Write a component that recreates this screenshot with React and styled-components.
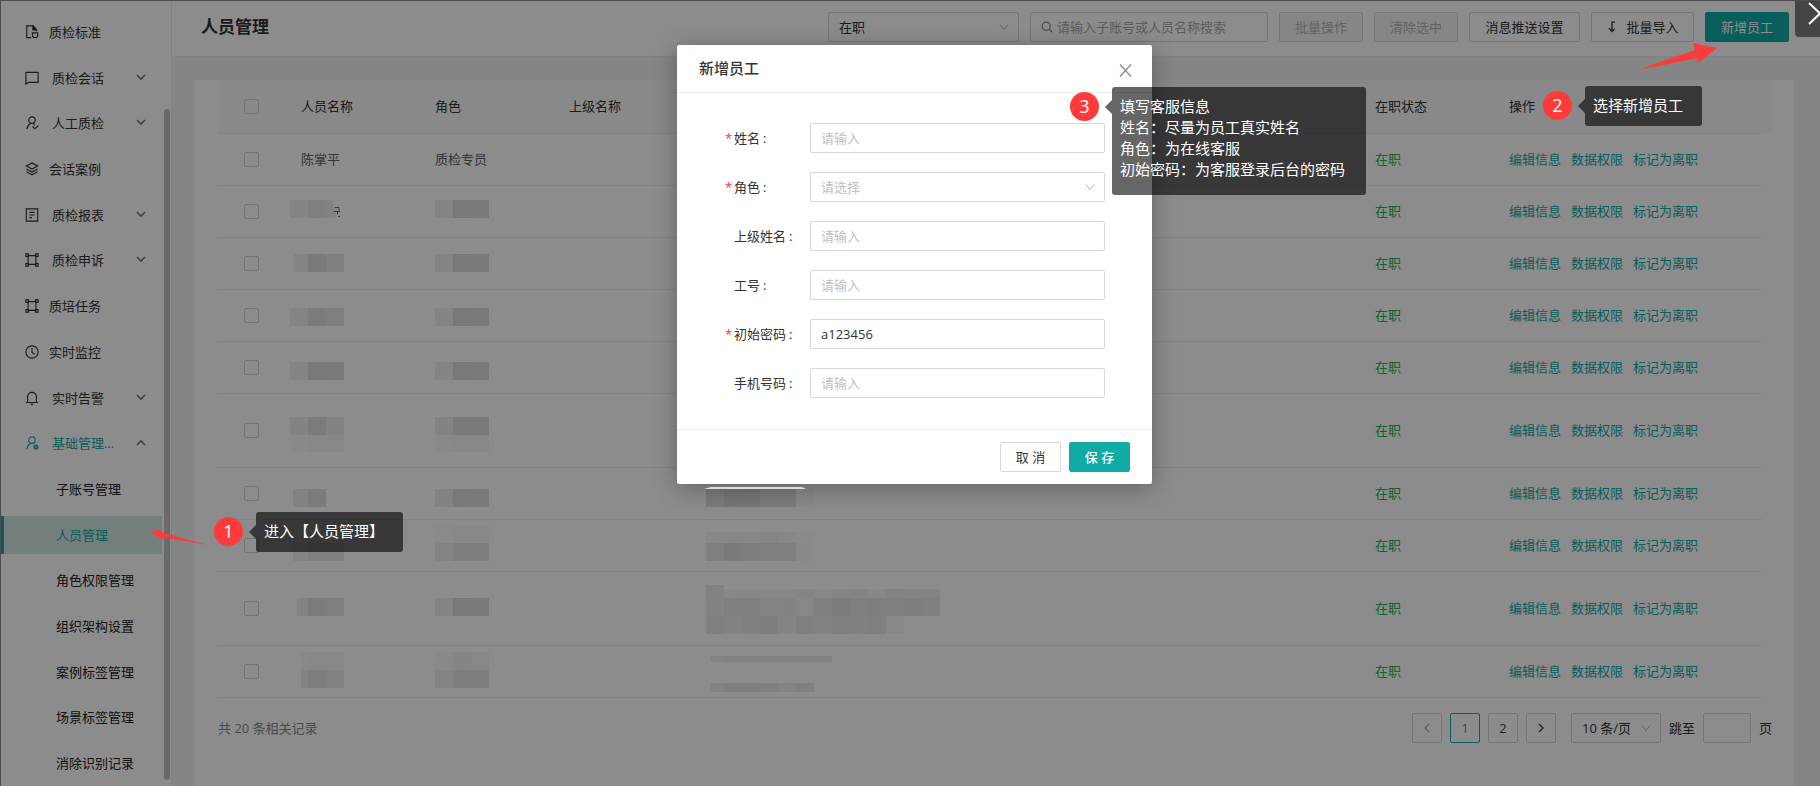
import React from "react";
import styled, { createGlobalStyle, css } from "styled-components";

const Global = createGlobalStyle`
  *, *::before, *::after { box-sizing: border-box; }
  body { margin: 0; background: #fff; }
  body, button, input, select { font-family: "Open Sans", "Noto Sans CJK SC", sans-serif; font-size: 13px; line-height: 20px; }
  button { cursor: pointer; }
`;

const TEAL = "#10aba5";

const Shell = styled.div`
  display: flex;
  min-height: 100vh;
  border-top: 1px solid #4e4a50;
  border-left: 1px solid #4e4a50;
  position: relative;
  overflow: hidden;
  color: #333;
`;

const Sidebar = styled.aside`
  flex: none;
  display: flex;
  width: 171px;
  border-right: 1px solid #ececec;
`;
const Nav = styled.nav`
  flex: 1;
  display: flex;
  flex-direction: column;
  justify-content: space-between;
  padding: 12px 0 4px;
`;
const NavItem = styled.a`
  display: flex;
  align-items: center;
  gap: ${(p) => (p.$group ? 13 : 10)}px;
  height: 38px;
  padding: 0 16px 0 ${(p) => (p.$sub ? 55 : 24)}px;
  color: ${(p) => (p.$on ? TEAL : p.$sub ? "#222" : "#333")};
  text-decoration: none;
  white-space: nowrap;
  ${(p) => p.$active && css`
    background: #d2e8e2;
    border-left: 3px solid ${TEAL};
    padding-left: 52px;
  `}
`;
const NavArrow = styled.span`
  display: flex;
  margin-left: auto;
  color: #777;
`;
const ScrollTrack = styled.div`
  width: 9px;
  padding: 108px 1px 6px 2px;
  display: flex;
`;
const ScrollThumb = styled.div`
  flex: 1;
  border-radius: 3px;
  background: #c2c2c2;
`;

const Main = styled.main`
  flex: 1;
  min-width: 0;
  display: flex;
  flex-direction: column;
  background: #f0f5f3;
`;
const Header = styled.header`
  display: flex;
  align-items: center;
  gap: 11px;
  height: 56px;
  padding: 10px 31px 13px 29px;
  background: #fff;
  border-bottom: 1px solid #ececec;
`;
const Title = styled.h1`
  margin: 0 auto 0 0;
  font-size: 17px;
  line-height: 24px;
  font-weight: 700;
`;
const control = css`
  height: 30px;
  border: 1px solid #d6d8d8;
  border-radius: 2px;
  background: #fff;
  color: #333;
`;
const SelectWrap = styled.span`
  position: relative;
  display: inline-flex;
  width: ${(p) => (p.$w ? p.$w + "px" : "100%")};
  svg { position: absolute; right: 10px; top: 10px; color: #b4b4b4; pointer-events: none; }
`;
const Select = styled.select`
  ${control}
  width: 100%;
  padding: 0 10px;
  appearance: none;
  color: ${(p) => (p.$empty ? "#bfbfbf" : "#333")};
`;
const Search = styled.label`
  ${control}
  display: flex;
  align-items: center;
  gap: 4px;
  width: 238px;
  padding: 0 10px;
  color: #888;
  input { flex: 1; min-width: 0; border: 0; padding: 0; outline: 0; background: none; }
  input::placeholder { color: #aaa; }
`;
const Button = styled.button`
  ${control}
  display: inline-flex;
  align-items: center;
  justify-content: center;
  gap: 8px;
  width: ${(p) => p.$w}px;
  padding: 0;
  white-space: nowrap;
  ${(p) => p.disabled && css`background: #f4f5f5; color: #b4b4b4; cursor: default;`}
  ${(p) => p.$primary && css`background: ${TEAL}; border-color: ${TEAL}; color: #fff;`}
  ${(p) => p.$strong && css`font-weight: 500;`}
`;

const Card = styled.section`
  flex: 1;
  margin: 23px 26px 0 23px;
  padding: 0 22px 0 23px;
  background: #fff;
`;
const TableArea = styled.div`
  position: relative;
  padding-right: 10px;
  background: linear-gradient(#fafafa, #fafafa) no-repeat top / 100% 53px;
`;
const Table = styled.table`
  width: 100%;
  table-layout: fixed;
  border-collapse: collapse;
  th, td { padding: 0 14px; text-align: left; font-weight: 400; border-bottom: 1px solid #efefef; white-space: nowrap; }
  th:first-child, td:first-child { padding: 0 26px; }
`;
const HeadRow = styled.tr`
  height: 53px;
`;
const BodyRow = styled.tr`
  height: ${(p) => (p.$tall ? 74 : 52)}px;
  color: #606266;
`;
const Tick = styled.input`
  appearance: none;
  display: block;
  width: 15px;
  height: 15px;
  margin: 0;
  border: 1px solid #d4d4d4;
  border-radius: 2px;
`;
const Status = styled.span`color: #1bb454;`;
const Ops = styled.div`
  display: flex;
  gap: 10px;
  a { color: ${TEAL}; text-decoration: none; }
`;
const Redactions = styled.svg`
  position: absolute;
  left: 0;
  top: 0;
  pointer-events: none;
`;

const Footer = styled.footer`
  display: flex;
  align-items: center;
  justify-content: space-between;
  height: 30px;
  margin-top: 15px;
  color: #888;
`;
const Pager = styled.div`
  display: flex;
  align-items: center;
  gap: 8px;
  color: #333;
`;
const PageButton = styled.button`
  ${control}
  display: flex;
  align-items: center;
  justify-content: center;
  width: 30px;
  padding: 0;
  color: ${(p) => (p.$on ? TEAL : p.disabled ? "#aaa" : "#444")};
  border-color: ${(p) => (p.$on ? TEAL : "#d6d8d8")};
  ${(p) => p.$last && css`margin-right: 7px;`}
`;
const Jump = styled.input`
  ${control}
  width: 48px;
`;

const Mask = styled.div`
  position: absolute;
  inset: -1px 0 0 -1px;
  display: flex;
  align-items: flex-start;
  justify-content: center;
  padding: 45px 0 0 9px;
  background: rgba(0, 0, 0, 0.45);
`;
const Dialog = styled.form`
  width: 475px;
  background: #fff;
  border-radius: 2px;
  box-shadow: 0 4px 24px rgba(0, 0, 0, 0.3);
`;
const DialogHead = styled.div`
  display: flex;
  align-items: center;
  justify-content: space-between;
  height: 48px;
  padding: 0 20px 2px 22px;
  border-bottom: 1px solid #ececec;
  h2 { margin: 0; font-size: 15px; line-height: 22px; font-weight: 500; }
`;
const CloseButton = styled.button`
  display: flex;
  padding: 6px 0 0;
  border: 0;
  background: none;
  color: #8c8c8c;
`;
const DialogBody = styled.div`
  display: flex;
  flex-direction: column;
  gap: 19px;
  padding: 30px 47px 31px 48px;
`;
const Field = styled.div`
  display: flex;
  align-items: center;
  label { flex: none; display: flex; width: 85px; gap: 3px; }
  label::before { content: "${(p) => (p.$required ? "*" : "")}"; width: 6px; color: #f5323c; }
  label::after { content: ":"; }
`;
const TextInput = styled.input`
  ${control}
  flex: 1;
  min-width: 0;
  padding: 0 10px;
  &::placeholder { color: #bfbfbf; }
`;
const DialogFoot = styled.div`
  display: flex;
  justify-content: flex-end;
  gap: 8px;
  padding: 12px 22px;
  border-top: 1px solid #ececec;
`;

const Annotations = styled.svg`
  position: absolute;
  left: -1px;
  top: -1px;
  pointer-events: none;
`;
const Hint = styled.div`
  position: absolute;
  left: ${(p) => p.$x}px;
  top: ${(p) => p.$y}px;
  display: flex;
  align-items: flex-start;
  gap: 13px;
  color: #fff;
`;
const Badge = styled.span`
  width: 29px;
  height: 29px;
  margin-top: 5px;
  border-radius: 50%;
  background: #ff3a3a;
  font-size: 18px;
  line-height: 28px;
  text-align: center;
`;
const Bubble = styled.div`
  position: relative;
  width: ${(p) => p.$w}px;
  padding: 9px 8px ${(p) => (p.$long ? 15 : 10)}px;
  border-radius: 3px;
  background: rgba(0, 0, 0, 0.6);
  font-size: 15px;
  line-height: 21px;
  white-space: nowrap;
  &::before {
    content: "";
    position: absolute;
    left: -7px;
    top: 13px;
    border: 7px solid transparent;
    border-left: 0;
    border-right-color: rgba(0, 0, 0, 0.6);
  }
`;
const CornerClose = styled.button`
  position: absolute;
  right: 0;
  top: -1px;
  width: 25px;
  height: 37px;
  padding: 0;
  border: 0;
  border-bottom-left-radius: 4px;
  background: #454545;
  color: #fff;
  svg { display: block; }
`;

const Svg = ({ s = 14, children, box = 16, w = 1.3 }) => (
  <svg width={s} height={s} viewBox={`0 0 ${box} ${box}`} fill="none" stroke="currentColor" strokeWidth={w} aria-hidden="true">{children}</svg>
);
const Chevron = ({ d = "M1 2.500l4 5 4-5", s = 10, w = 1 }) => <Svg s={s} box={10} w={w}><path d={d} /></Svg>;

const icons = {
  doc: <><path d="M7 14.500H2V1h7.500l3.500 4v2" /><path d="M9 1v4.500h4z" fill="currentColor" /><path d="M8.500 9h6v3c0 1.500-1.300 2.500-3 2.500s-3-1-3-2.500z" /></>,
  chat: <path d="M1 1.500h14v11.500H4L1 15z" />,
  userCheck: <><circle cx="8" cy="4.700" r="3.700" /><path d="M6.500 8.200C4.500 9.500 2.500 11.500 2 15M9.500 8.200l1.500 2.300M8.500 12l2.800 2.600L15.300 11" /></>,
  layers: <path d="M8 1l6.500 3.500L8 8 1.500 4.500zM1.500 8L8 11.500 14.500 8M1.500 11L8 14.700 14.500 11" />,
  report: <path d="M1.500 1h13v14h-13zM5 5h6M5 8h6M5 11h3" />,
  frame: <><path d="M3.500 3h9v10h-9z" /><path d="M1 1h3v3H1zM12 1h3v3h-3zM1 12h3v3H1zM12 12h3v3h-3z" /></>,
  clock: <><circle cx="8" cy="8" r="7" /><path d="M8 3.500V8.500l3 2" /></>,
  bell: <path d="M1 13.200h14M3 13V6.500a5 5 0 0 1 10 0V13M6.500 15.300h3" />,
  userCog: <><circle cx="8" cy="4.700" r="3.700" /><path d="M6.500 8.200C4.500 9.500 2.500 11.500 2 15M9.500 8.200l1.200.8" /><circle cx="12.500" cy="12.500" r="1.900" strokeWidth="2" /></>,
};

const MENU = [
  { t: "质检标准", i: "doc" },
  { t: "质检会话", i: "chat", g: 1 },
  { t: "人工质检", i: "userCheck", g: 1 },
  { t: "会话案例", i: "layers" },
  { t: "质检报表", i: "report", g: 1 },
  { t: "质检申诉", i: "frame", g: 1 },
  { t: "质培任务", i: "frame" },
  { t: "实时监控", i: "clock" },
  { t: "实时告警", i: "bell", g: 1 },
  { t: "基础管理...", i: "userCog", g: 1, open: 1 },
  ...["子账号管理", "人员管理", "角色权限管理", "组织架构设置", "案例标签管理", "场景标签管理", "消除识别记录"].map((t) => ({ t, sub: 1, active: t === "人员管理" })),
];

const ROWS = [
  { name: "陈掌平", role: "质检专员" }, {}, {}, {}, {}, { tall: 1 }, {}, {}, { tall: 1 }, {},
];

/* Pixelated personal data: [left, top, height, shade of each tile].
   Tiles sit on an 18px grid that starts at each column's own origin. */
const TILE = 18;
const ORIGINS = [488, 217, 72];
const TILES = [
  [72, 120, 18, [6, 10]], [217, 120, 18, [6, 16, 14]],
  [76, 174, 18, [6, 15, 10]], [217, 174, 18, [6, 16, 14]],
  [72, 228, 18, [6, 13, 10]], [217, 228, 18, [6, 16, 14]],
  [72, 282, 18, [6, 15, 14]], [217, 282, 18, [6, 16, 14]],
  [72, 337, 18, [7, 13, 7]], [72, 355, 17, [2, 4, 4]], [217, 337, 18, [7, 14, 14]], [217, 355, 17, [2, 4, 4]],
  [75, 409, 18, [8, 13]], [217, 409, 18, [7, 16, 14]],
  [75, 463, 18, [6, 10, 10]], [217, 445, 18, [1, 3, 3]], [217, 463, 18, [6, 12, 11]],
  [79, 518, 18, [8, 13, 10]], [217, 518, 18, [6, 16, 15]],
  [83, 572, 18, [3, 4, 4]], [83, 590, 18, [7, 11, 8]], [217, 572, 18, [2, 5, 4]], [217, 590, 18, [6, 12, 11]],
  [488, 409, 18, [13, 18, 17, 13, 13, 2]],
  [488, 452, 11, [4, 4, 4, 5, 4, 1]], [488, 463, 18, [10, 14, 12, 10, 10, 2]],
  [488, 505, 4, [8]],
  [488, 509, 9, [8, 3, 4, 4, 4, 5, 4, 5, 6, 4, 8, 7, 6]],
  [488, 518, 18, [7, 10, 10, 6, 7, 4, 9, 13, 10, 11, 10, 11, 9]],
  [488, 536, 18, [10, 8, 9, 11, 6, 10, 8, 10, 9, 10, 4]],
  [492, 576, 6, [6, 8, 8, 8, 8, 8, 8]], [492, 603, 9, [8, 11, 11, 9, 7, 9]],
];

const HINTS = [
  { n: 1, x: 213, y: 511, w: 147, lines: ["进入【人员管理】"] },
  { n: 2, x: 1542, y: 85, w: 117, lines: ["选择新增员工"] },
  { n: 3, x: 1069, y: 86, w: 254, lines: ["填写客服信息", "姓名：尽量为员工真实姓名", "角色：为在线客服", "初始密码：为客服登录后台的密码"] },
];

const FIELDS = [
  { id: "name", t: "姓名", req: 1 },
  { id: "role", t: "角色", req: 1, select: 1 },
  { id: "boss", t: "上级姓名" },
  { id: "no", t: "工号" },
  { id: "pwd", t: "初始密码", req: 1, v: "a123456" },
  { id: "phone", t: "手机号码" },
];

function SideMenu() {
  return (
    <Sidebar>
      <Nav>
        {MENU.map((m) => (
          <NavItem key={m.t} href="#" $sub={m.sub} $group={m.g} $active={m.active} $on={m.active || m.open}>
            {m.i && <Svg>{icons[m.i]}</Svg>}
            <span>{m.t}</span>
            {m.g && <NavArrow><Chevron w={1.6} d={m.open ? "M1 7l4-4 4 4" : "M1 2l4 4 4-4"} /></NavArrow>}
          </NavItem>
        ))}
      </Nav>
      <ScrollTrack><ScrollThumb /></ScrollTrack>
    </Sidebar>
  );
}

function TileStrip({ x, y, h, shades }) {
  const origin = ORIGINS.find((o) => o <= x);
  return shades.map((shade, i) => {
    const left = Math.max(x, origin + i * TILE);
    const right = origin + (i + 1) * TILE;
    return <rect key={i} x={left} y={y} width={right - left} height={h} fill="#101814" fillOpacity={shade / 100} />;
  });
}

function StaffTable() {
  return (
    <TableArea>
      <Table>
        <colgroup>
          <col width="69" /><col width="134" /><col width="134" /><col width="134" />
          <col /><col width="134" /><col width="267" />
        </colgroup>
        <thead>
          <HeadRow>
            <th><Tick type="checkbox" aria-label="全选" /></th>
            <th>人员名称</th><th>角色</th><th>上级名称</th><th /><th>在职状态</th><th>操作</th>
          </HeadRow>
        </thead>
        <tbody>
          {ROWS.map((r, i) => (
            <BodyRow key={i} $tall={r.tall}>
              <td><Tick type="checkbox" aria-label="选择" /></td>
              <td>{r.name}</td><td>{r.role}</td><td /><td />
              <td><Status>在职</Status></td>
              <td><Ops><a href="#">编辑信息</a><a href="#">数据权限</a><a href="#">标记为离职</a></Ops></td>
            </BodyRow>
          ))}
        </tbody>
      </Table>
      <Redactions width="760" height="620">
        {TILES.map(([x, y, h, shades], r) => <TileStrip key={r} x={x} y={y} h={h} shades={shades} />)}
        <path d="M108 120h6l4 12v6h-10z" fill="#101814" fillOpacity="0.08" />
        <path d="M117 127.500h4v3M115.500 131.500h6.500M119.500 131.500v3M120 136.500h2" fill="none" stroke="#666" />
      </Redactions>
    </TableArea>
  );
}

export default function App() {
  return (
    <>
      <Global />
      <Shell>
        <SideMenu />
        <Main>
          <Header>
            <Title>人员管理</Title>
            <SelectWrap $w={191}>
              <Select aria-label="在职状态"><option>在职</option></Select>
              <Chevron />
            </SelectWrap>
            <Search>
              <Svg s={12} w={1.5}><circle cx="7" cy="7" r="5.500" /><path d="M11 11l4 4" /></Svg>
              <input aria-label="搜索" placeholder="请输入子账号或人员名称搜索" />
            </Search>
            <Button $w={84} disabled>批量操作</Button>
            <Button $w={84} disabled>清除选中</Button>
            <Button $w={111}>消息推送设置</Button>
            <Button $w={103}>
              <Svg s={12} w={1.8}><path d="M12 1.500H8V13M4 9.500L8 14l3.500-3.500" /></Svg>
              批量导入
            </Button>
            <Button $w={84} $primary>新增员工</Button>
          </Header>
          <Card>
            <StaffTable />
            <Footer>
              <span>共 20 条相关记录</span>
              <Pager>
                <PageButton disabled aria-label="上一页"><Chevron w={1.2} d="M7 1L3 5l4 4" /></PageButton>
                <PageButton $on>1</PageButton>
                <PageButton>2</PageButton>
                <PageButton $last aria-label="下一页"><Chevron w={1.4} d="M3 1l4 4-4 4" /></PageButton>
                <SelectWrap $w={90}>
                  <Select aria-label="每页条数"><option>10 条/页</option></Select>
                  <Chevron />
                </SelectWrap>
                <label htmlFor="jump">跳至</label>
                <Jump id="jump" />
                <span>页</span>
              </Pager>
            </Footer>
          </Card>
        </Main>

        <Mask>
          <Dialog role="dialog" aria-labelledby="dialog-title">
            <DialogHead>
              <h2 id="dialog-title">新增员工</h2>
              <CloseButton type="button" aria-label="关闭">
                <Svg s={13} box={12} w={1.2}><path d="M1 .5l10 11M11 .5L1 11.500" /></Svg>
              </CloseButton>
            </DialogHead>
            <DialogBody>
              {FIELDS.map((f) => (
                <Field key={f.id} $required={f.req}>
                  <label htmlFor={f.id}>{f.t}</label>
                  {f.select ? (
                    <SelectWrap>
                      <Select id={f.id} $empty><option>请选择</option></Select>
                      <Chevron />
                    </SelectWrap>
                  ) : (
                    <TextInput id={f.id} placeholder="请输入" defaultValue={f.v} />
                  )}
                </Field>
              ))}
            </DialogBody>
            <DialogFoot>
              <Button type="button" $w={61}>取 消</Button>
              <Button type="button" $w={61} $primary $strong>保 存</Button>
            </DialogFoot>
          </Dialog>
        </Mask>

        <Annotations width="1820" height="786">
          <path d="M704 489L711 487H802L806 489z" fill="#dedede" />
          <path d="M150 532L162 529 161 532 207 545 162 537 164 540z" fill="#ff3a3a" />
          <path d="M1717 48L1693 43 1695 50 1643 68 1644 69 1697 58 1698 63z" fill="#ff3a3a" />
        </Annotations>
        {HINTS.map((h) => (
          <Hint key={h.n} $x={h.x} $y={h.y}>
            <Badge>{h.n}</Badge>
            <Bubble $w={h.w} $long={h.lines.length > 1}>{h.lines.map((l) => <div key={l}>{l}</div>)}</Bubble>
          </Hint>
        ))}
        <CornerClose aria-label="关闭窗口">
          <svg width="25" height="37" fill="none" stroke="currentColor" strokeWidth="2"><path d="M14 3l11 10.500L14 24" /></svg>
        </CornerClose>
      </Shell>
    </>
  );
}
